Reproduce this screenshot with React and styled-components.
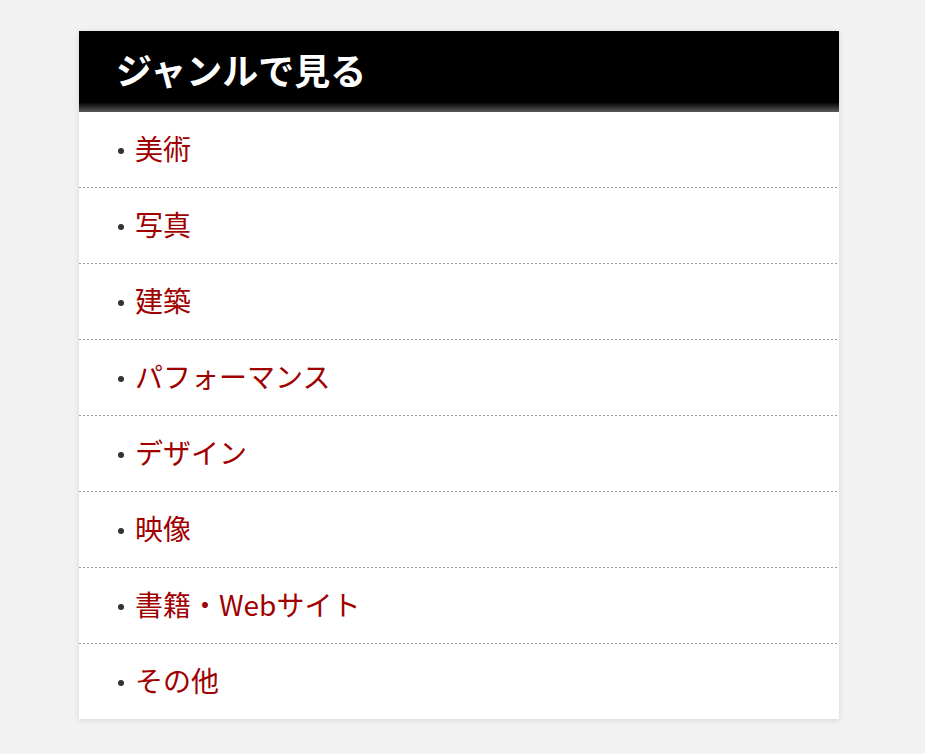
import styled, { createGlobalStyle } from 'styled-components'

const GlobalStyle = createGlobalStyle`
  body {
    margin: 0;
    background: #f2f2f2;
    font-family: "Noto Sans CJK JP", "Noto Sans", sans-serif;
  }
`

const Page = styled.div`
  padding: 31px 0 0 79px;
  min-height: 754px;
  box-sizing: border-box;
`

const Panel = styled.section`
  width: 760px;
  background: #fff;
  box-shadow: 0 1px 6px rgba(0, 0, 0, 0.12);
`

const Header = styled.h2`
  margin: 0;
  height: 81px;
  box-sizing: border-box;
  padding: 0 0 6px 37px;
  display: flex;
  align-items: center;
  background: linear-gradient(to bottom, #000 0%, #000 88%, #5a5a5a 100%);
  color: #fff;
  font-size: 36px;
  font-weight: 700;
`

const List = styled.ul`
  list-style: none;
  margin: 0;
  padding: 0;
`

const Item = styled.li`
  height: ${({ $last }) => ($last ? '75px' : '76px')};
  box-sizing: border-box;
  display: flex;
  align-items: center;
  padding: 0 0 4px 39px;
  background-image: ${({ $last }) =>
    $last ? 'none' : 'linear-gradient(to right, #999 50%, transparent 50%)'};
  background-size: 4px 1px;
  background-repeat: repeat-x;
  background-position: left bottom;

  &::before {
    content: '';
    width: 6px;
    height: 6px;
    border-radius: 50%;
    background: #333;
    margin: 6px 11px 0 0;
  }
`

const ItemLink = styled.a`
  color: #a00000;
  font-size: 28px;
  text-decoration: none;
  line-height: 1;
`

const genres = ['美術', '写真', '建築', 'パフォーマンス', 'デザイン', '映像', '書籍・Webサイト', 'その他']

export default function App() {
  return (
    <>
      <GlobalStyle />
      <Page>
        <Panel>
          <Header>ジャンルで見る</Header>
          <List>
            {genres.map((g, i) => (
              <Item key={g} $last={i === genres.length - 1}>
                <ItemLink href="#">{g}</ItemLink>
              </Item>
            ))}
          </List>
        </Panel>
      </Page>
    </>
  )
}
